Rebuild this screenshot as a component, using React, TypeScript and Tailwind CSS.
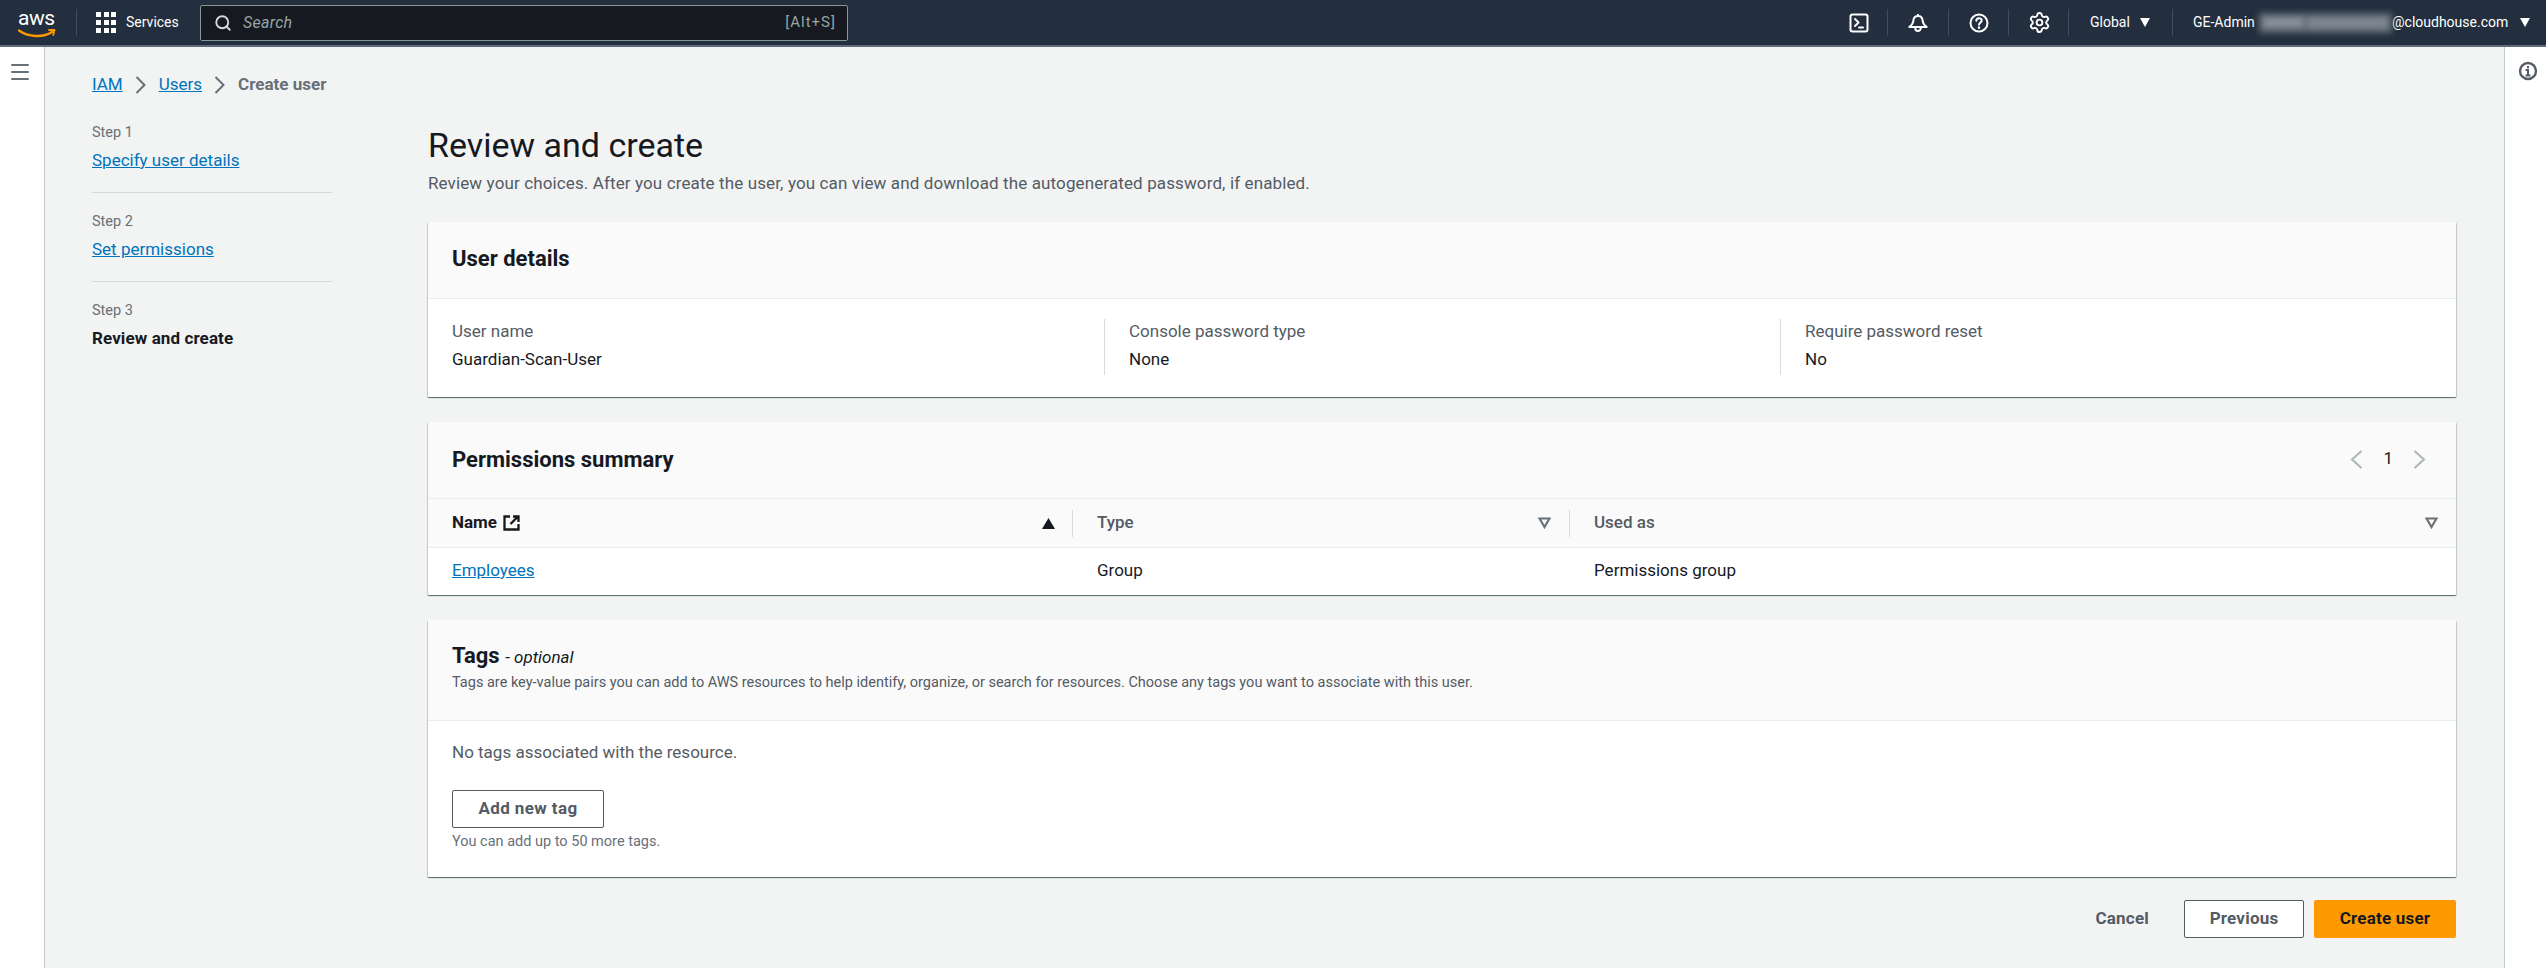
import { Search, Menu, Settings } from "lucide-react"

function AwsLogo() {
  return (
    <div className="relative w-[38px] h-[34px] ml-[18px]">
      <span className="absolute left-0 top-[-1px] text-[21px] leading-[26px] text-white tracking-[-0.5px]">aws</span>
      <svg className="absolute left-0 top-[23px]" width="38" height="12" viewBox="0 0 38 12" fill="none">
        <path d="M1 1.500c9 6.500 24 7.500 33 1.500" stroke="#ff9900" strokeWidth="2.400" strokeLinecap="round" />
        <path d="M31 1h5.500l-1.200 5" stroke="#ff9900" strokeWidth="1.800" strokeLinecap="round" strokeLinejoin="round" />
      </svg>
    </div>
  )
}

function GridIcon() {
  return (
    <div className="grid grid-cols-3 gap-[3px] w-[20px]">
      {Array.from({ length: 9 }).map((_, i) => (
        <div key={i} className="w-[5px] h-[5px] bg-white" />
      ))}
    </div>
  )
}

function TerminalIcon() {
  return (
    <svg width="20" height="20" viewBox="0 0 20 20" fill="none" stroke="white" strokeWidth="2" strokeLinecap="round" strokeLinejoin="round">
      <rect x="1.500" y="1.500" width="17" height="17" rx="2" />
      <path d="M6 6l3.500 3.500L6 13M10 14.500h4" />
    </svg>
  )
}

function BellIcon() {
  return (
    <svg width="20" height="20" viewBox="0 0 20 20" fill="none" stroke="white" strokeWidth="2" strokeLinejoin="round">
      <path d="M10 1v2M10 3c-3 0-4.500 2.300-4.700 5-.2 2.800-1.800 4.300-4 6h17.400c-2.200-1.700-3.800-3.200-4-6C14.500 5.300 13 3 10 3z" />
      <path d="M7.200 14.500c0 4.800 5.600 4.800 5.600 0" />
    </svg>
  )
}

function HelpIcon() {
  return (
    <svg width="20" height="20" viewBox="0 0 20 20" fill="none" stroke="white" strokeWidth="2" strokeLinecap="round">
      <circle cx="10" cy="10" r="8.500" />
      <path d="M7.300 7.800c0-3.600 5.400-3.400 5.400-.3 0 2.200-2.700 2-2.700 4.300" />
      <path d="M10 14.500v.2" strokeWidth="2.400" />
    </svg>
  )
}

function Caret({ className }: { className?: string }) {
  return (
    <svg className={className} width="10" height="9" viewBox="0 0 10 9" fill="white">
      <path d="M0 0h10L5 9z" />
    </svg>
  )
}

function HeaderDivider() {
  return <div className="w-px h-[27px] bg-[#414d5c]" />
}

function TopNav() {
  return (
    <header className="h-[47px] bg-[#232f3e] border-b-2 border-[#5f6b7a] flex items-center text-white text-[14px] shrink-0">
      <AwsLogo />
      <div className="w-px h-[27px] bg-[#414d5c] ml-[20px]" />
      <div className="ml-[19px]"><GridIcon /></div>
      <span className="ml-[10px] w-[54px] whitespace-nowrap">Services</span>
      <div className="ml-[20px] w-[648px] h-[36px] bg-[#16191f] border border-[#879596] rounded-[2px] flex items-center pl-[13px] pr-[11px]">
        <Search size={18} strokeWidth={2.5} className="text-[#d5dbdb]" />
        <span className="ml-[11px] italic text-[16px] tracking-[0.3px] text-[#95a5a6]">Search</span>
        <span className="ml-auto text-[15px] tracking-[1px] text-[#95a5a6]">[Alt+S]</span>
      </div>
      <div className="ml-auto flex items-center">
        <TerminalIcon />
        <div className="ml-[18px]"><HeaderDivider /></div>
        <div className="ml-[20px]"><BellIcon /></div>
        <div className="ml-[20px]"><HeaderDivider /></div>
        <div className="ml-[20px]"><HelpIcon /></div>
        <div className="ml-[19px]"><HeaderDivider /></div>
        <Settings size={23} strokeWidth={2} className="ml-[19px]" />
        <div className="ml-[17px]"><HeaderDivider /></div>
        <span className="ml-[21px] w-[42px] whitespace-nowrap">Global</span>
        <Caret className="ml-[8px]" />
        <div className="ml-[22px]"><HeaderDivider /></div>
        <span className="ml-[20px] w-[66px] whitespace-nowrap">GE-Admin</span>
        <div className="w-[133px] h-[20px] bg-[#626c77] blur-[3px] flex items-center gap-[5px] px-[4px]">
          <div className="w-[40px] h-[9px] bg-[#8b939c]" />
          <div className="flex-1 h-[10px] bg-[#7f8891]" />
        </div>
        <span className="w-[121px] whitespace-nowrap">@cloudhouse.com</span>
        <Caret className="ml-[7px] mr-[16px]" />
      </div>
    </header>
  )
}

function Step({ n, label, href, last }: { n: number; label: string; href?: boolean; last?: boolean }) {
  return (
    <div className={last ? "pt-px" : "border-b border-[#d5dbdb] pt-px pb-[21px] mb-[17px]"}>
      <div className="text-[14.500px] leading-[22px] text-[#687078]">Step {n}</div>
      {href ? (
        <a className="block mt-[5px] text-[17px] leading-[22px] text-[#0073bb] underline">{label}</a>
      ) : (
        <div className="mt-[5px] text-[17px] tracking-[0.1px] leading-[22px] font-bold text-[#16191f]">{label}</div>
      )}
    </div>
  )
}

function Card({ className, children }: { className?: string; children: React.ReactNode }) {
  return (
    <section className={`bg-white rounded-[1px] shadow-[0_1px_1px_0_rgba(0,28,36,0.5),1px_1px_1px_0_rgba(0,28,36,0.15),-1px_1px_1px_0_rgba(0,28,36,0.15)] ${className ?? ""}`}>
      {children}
    </section>
  )
}

function ExternalIcon() {
  return (
    <svg width="17" height="16" viewBox="0 0 17 16" fill="none" stroke="#16191f" strokeWidth="2.300">
      <path d="M7 1.500H1.500v13h14V9" />
      <path d="M7.500 9L15 1.500M10 1.500h5.500V7" />
    </svg>
  )
}

function SortUp() {
  return (
    <svg width="13" height="11" viewBox="0 0 13 11" fill="#16191f"><path d="M6.500 0L13 11H0z" /></svg>
  )
}

function SortDown() {
  return (
    <svg width="13" height="12" viewBox="0 0 13 12" fill="none" stroke="#687078" strokeWidth="2.200"><path d="M1.500 1.500h10L6.500 10z" /></svg>
  )
}

function Chevron({ dir }: { dir: "left" | "right" }) {
  return (
    <svg width="13" height="19" viewBox="0 0 13 19" fill="none" stroke="#aab7b8" strokeWidth="2">
      <path d={dir === "left" ? "M11.500 1L2 9.500l9.500 8.500" : "M1.500 1L11 9.500 1.500 18"} />
    </svg>
  )
}

function Detail({ label, value, className }: { label: string; value: string; className?: string }) {
  return (
    <div className={className}>
      <div className="pt-px text-[17px] leading-[22px] text-[#545b64]">{label}</div>
      <div className="mt-[6px] text-[17px] leading-[22px] text-[#16191f]">{value}</div>
    </div>
  )
}

export default function App() {
  return (
    <div className="h-[968px] w-[2546px] flex flex-col overflow-hidden bg-[#f2f3f3] text-[#16191f] font-['Roboto',sans-serif]">
      <TopNav />
      <div className="flex flex-1 min-h-0">
        <aside className="w-[45px] bg-white border-r border-[#c6cccc] shrink-0 pt-[13px] pl-[8px]">
          <Menu size={24} strokeWidth={2} className="text-[#687078]" />
        </aside>

        <main className="flex-1 pl-[47px] pr-[48px] pt-[26px]">
          <nav className="flex items-center h-[24px] text-[17px]">
            <a className="text-[#0073bb] underline">IAM</a>
            <svg className="mx-[12px]" width="12" height="20" viewBox="0 0 12 20" fill="none" stroke="#687078" strokeWidth="2"><path d="M1.500 2l8 8-8 8" /></svg>
            <a className="text-[#0073bb] underline">Users</a>
            <svg className="mx-[12px]" width="12" height="20" viewBox="0 0 12 20" fill="none" stroke="#687078" strokeWidth="2"><path d="M1.500 2l8 8-8 8" /></svg>
            <span className="text-[#687078] font-bold">Create user</span>
          </nav>

          <div className="flex mt-[24px]">
            <div className="w-[240px] shrink-0 mr-[96px]">
              <Step n={1} label="Specify user details" href />
              <Step n={2} label="Set permissions" href />
              <Step n={3} label="Review and create" last />
            </div>

            <div className="flex-1 min-w-0">
              <h1 className="mt-[4px] text-[34px] leading-[40px] font-normal">Review and create</h1>
              <p className="mt-[7px] text-[17px] tracking-[0.12px] leading-[22px] text-[#545b64]">
                Review your choices. After you create the user, you can view and download the autogenerated password, if enabled.
              </p>

              <Card className="mt-[28px]">
                <div className="h-[77px] bg-[#fafafa] border-b border-[#eaeded] flex items-center px-[24px] pb-[3px]">
                  <h2 className="text-[22px] font-bold">User details</h2>
                </div>
                <div className="h-[98px] flex pl-[24px] pt-[20px]">
                  <Detail label="User name" value="Guardian-Scan-User" className="w-[652px]" />
                  <Detail label="Console password type" value="None" className="w-[676px] h-[56px] border-l border-[#d5dbdb] pl-[24px]" />
                  <Detail label="Require password reset" value="No" className="flex-1 h-[56px] border-l border-[#d5dbdb] pl-[24px]" />
                </div>
              </Card>

              <Card className="mt-[25px]">
                <div className="h-[77px] bg-[#fafafa] border-b border-[#eaeded] flex items-center justify-between px-[24px] pb-[2px]">
                  <h2 className="text-[22px] font-bold">Permissions summary</h2>
                  <div className="flex items-center mr-[6px]">
                    <Chevron dir="left" />
                    <span className="mx-[20px] text-[17px]">1</span>
                    <Chevron dir="right" />
                  </div>
                </div>
                <div className="h-[49px] bg-[#fafafa] border-b border-[#eaeded] flex items-center text-[17px] font-medium">
                  <div className="w-[644px] flex items-center justify-between pl-[24px] pr-[17px] font-bold">
                    <span className="flex items-center gap-[6px]">Name <ExternalIcon /></span>
                    <SortUp />
                  </div>
                  <div className="w-[497px] h-[27px] border-l border-[#d5dbdb] flex items-center justify-between pl-[24px] pr-[18px] text-[#545b64]">
                    <span>Type</span>
                    <SortDown />
                  </div>
                  <div className="flex-1 h-[27px] border-l border-[#d5dbdb] flex items-center justify-between pl-[24px] pr-[18px] text-[#545b64]">
                    <span>Used as</span>
                    <SortDown />
                  </div>
                </div>
                <div className="h-[47px] flex items-center text-[17px] pb-[2px]">
                  <div className="w-[644px] pl-[24px]"><a className="text-[#0073bb] underline">Employees</a></div>
                  <div className="w-[497px] pl-[25px]">Group</div>
                  <div className="flex-1 pl-[25px]">Permissions group</div>
                </div>
              </Card>

              <Card className="mt-[25px]">
                <div className="h-[101px] bg-[#fafafa] border-b border-[#eaeded] px-[24px] pt-[22px]">
                  <h2 className="text-[22px] leading-[28px] font-bold">
                    Tags <span className="text-[17px] font-normal italic"><span className="not-italic">-</span> optional</span>
                  </h2>
                  <p className="mt-[2px] text-[14.500px] leading-[20px] text-[#545b64]">
                    Tags are key-value pairs you can add to AWS resources to help identify, organize, or search for resources. Choose any tags you want to associate with this user.
                  </p>
                </div>
                <div className="h-[156px] px-[24px] pt-[20px]">
                  <p className="text-[17px] leading-[22px] text-[#545b64]">No tags associated with the resource.</p>
                  <button className="block mt-[27px] w-[152px] h-[38px] bg-white border border-[#545b64] rounded-[2px] text-[17px] tracking-[0.4px] font-bold text-[#545b64]">Add new tag</button>
                  <p className="mt-[5px] text-[14.500px] leading-[18px] text-[#687078]">You can add up to 50 more tags.</p>
                </div>
              </Card>

              <div className="mt-[23px] flex items-center justify-end text-[17px] tracking-[0.2px] font-bold">
                <button className="mr-[35px] text-[#545b64]">Cancel</button>
                <button className="w-[120px] h-[38px] bg-white border border-[#545b64] rounded-[2px] text-[#545b64]">Previous</button>
                <button className="ml-[10px] w-[142px] h-[38px] bg-[#ff9900] rounded-[2px] text-[#16191f]">Create user</button>
              </div>
            </div>
          </div>
        </main>

        <aside className="w-[42px] bg-white border-l border-[#c6cccc] shrink-0 pt-[14px] pl-[13px]">
          <svg width="20" height="20" viewBox="0 0 20 20" fill="none" stroke="#545b64" strokeWidth="2.400">
            <circle cx="10" cy="10" r="8" />
            <path d="M7.500 9h2.500v5.500M7.500 14.500h5M10 5v2.200" strokeWidth="2" />
          </svg>
        </aside>
      </div>
    </div>
  )
}
